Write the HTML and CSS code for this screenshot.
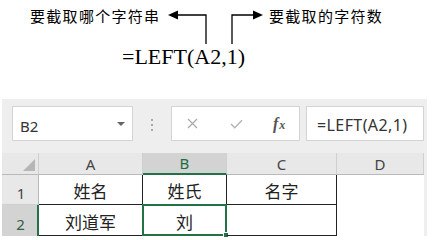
FILE: index.html
```html
<!DOCTYPE html>
<html lang="zh">
<head>
<meta charset="utf-8">
<title>LEFT</title>
<link rel="stylesheet" href="styles.css">
</head>
<body>
<div class="annot">
  <span class="lbl lbl-left">要截取哪个字符串</span>
  <svg class="arrows" width="100" height="45" viewBox="0 0 100 45">
    <polygon points="2,15 12,10.5 12,19.5" fill="#000"/>
    <polyline points="11,15 40,15 40,44" fill="none" stroke="#000" stroke-width="1.3"/>
    <polyline points="66,44 66,15 89,15" fill="none" stroke="#000" stroke-width="1.3"/>
    <polygon points="97,15 87,10.5 87,19.5" fill="#000"/>
  </svg>
  <span class="lbl lbl-right">要截取的字符数</span>
</div>
<div class="formula">=LEFT(A2,1)</div>

<div class="excel">
  <div class="fbar">
    <div class="namebox">
      <span class="nb-text">B2</span>
      <span class="caret"></span>
    </div>
    <div class="grip"><i></i><i></i><i></i></div>
    <div class="btns">
      <svg class="ico-x" width="11" height="11" viewBox="0 0 11 11">
        <path d="M1 1 L10 10 M10 1 L1 10" stroke="#a9a9a9" stroke-width="1.2" fill="none"/>
      </svg>
      <svg class="ico-ok" width="13" height="10" viewBox="0 0 13 10">
        <path d="M1 5 L4.8 8.8 L12 1.2" stroke="#b3b3b3" stroke-width="1.4" fill="none"/>
      </svg>
      <span class="fx"><span class="fx-f">f</span><span class="fx-x">x</span></span>
    </div>
    <div class="fbox">=LEFT(A2,1)</div>
  </div>

  <div class="grid">
    <div class="h corner"><span class="tri"></span></div>
    <div class="h col">A</div>
    <div class="h col col-sel">B</div>
    <div class="h col">C</div>
    <div class="h col">D</div>

    <div class="h row">1</div>
    <div class="c">姓名</div>
    <div class="c">姓氏</div>
    <div class="c">名字</div>
    <div class="c blank"></div>

    <div class="h row row-sel">2</div>
    <div class="c">刘道军</div>
    <div class="c sel">刘<span class="handle"></span></div>
    <div class="c"></div>
    <div class="c blank"></div>
  </div>
</div>
</body>
</html>
```

FILE: styles.css
```css
* { box-sizing: border-box; }
html, body { margin: 0; padding: 0; background: #fff; }
body { width: 436px; height: 239px; overflow: hidden; }

.annot {
  display: flex;
  align-items: flex-start;
  height: 45px;
}
.lbl {
  font-family: "Noto Sans CJK SC", sans-serif;
  font-size: 15px;
  line-height: 15px;
  letter-spacing: 1.3px;
  color: #000;
  padding-top: 8px;
  white-space: nowrap;
}
.lbl-left { margin-left: 30px; width: 136px; }
.arrows { display: block; flex: none; }
.lbl-right { margin-left: 3px; }

.formula {
  margin-left: 122px;
  font-family: "Liberation Serif", serif;
  font-size: 22px;
  line-height: 24px;
  height: 54px;
  color: #000;
}

.excel {
  margin-left: 2px;
  width: 425px;
  background: #eeeeee;
  padding-top: 7px;
}

.fbar {
  display: flex;
  height: 35px;
  padding-left: 10px;
}
.namebox {
  width: 121px;
  background: #fff;
  border: 1px solid #d4d4d4;
  display: flex;
  align-items: center;
  padding-left: 7px;
  padding-top: 4px;
}
.nb-text {
  font-family: "Noto Sans", sans-serif;
  font-size: 15px;
  color: #333;
  flex: 1;
}
.caret {
  width: 0; height: 0;
  border-left: 4px solid transparent;
  border-right: 4px solid transparent;
  border-top: 4px solid #666;
  margin-right: 7px;
  margin-top: -3px;
}
.grip {
  width: 38px;
  display: flex;
  flex-direction: column;
  align-items: center;
  justify-content: center;
  gap: 3px;
  padding-left: 0;
  padding-top: 2px;
}
.grip i {
  display: block;
  width: 2px; height: 2px;
  background: #a8a8a8;
}
.btns {
  width: 129px;
  background: #fff;
  border: 1px solid #d4d4d4;
  display: flex;
  align-items: center;
  padding-left: 15px;
}
.ico-x { display: block; }
.ico-ok { display: block; margin-left: 32px; margin-top: 1px; }
.fx {
  margin-left: 30px;
  font-family: "Liberation Serif", serif;
  font-style: italic;
  font-weight: bold;
  color: #555;
  display: flex;
  align-items: baseline;
}
.fx-f { font-size: 16px; }
.fx-x { font-size: 12px; margin-left: 1px; }
.fbox {
  width: 118px;
  margin-left: 6px;
  background: #fff;
  border: 1px solid #d4d4d4;
  display: flex;
  align-items: center;
  padding-left: 10px;
  padding-top: 3px;
  font-family: "Noto Sans", sans-serif;
  font-size: 16px;
  letter-spacing: 0.4px;
  color: #333;
  white-space: nowrap;
  overflow: hidden;
}

.grid {
  margin-top: 12px;
  display: grid;
  grid-template-columns: 37px 104px 84px 110px 87px;
  grid-template-rows: 22px 30px 31px;
  background: #fff;
  width: 422px;
}
.h {
  background: #e8e8e8;
  font-family: "Noto Sans", sans-serif;
  font-size: 15px;
  color: #444;
  display: flex;
  justify-content: center;
  align-items: flex-end;
  line-height: 18px;
}
.col {
  border-bottom: 1px solid #b9b9b9;
  border-right: 1px solid #cfcfcf;
  padding-bottom: 1px;
}
.col-sel {
  background: #d3d3d3;
  color: #1f6b3f;
  border-bottom: 2px solid #217346;
}
.corner {
  border-right: 1px solid #cfcfcf;
  border-bottom: 1px solid #b9b9b9;
  justify-content: flex-end;
  padding: 0 3px 3px 0;
}
.tri {
  width: 0; height: 0;
  border-left: 12px solid transparent;
  border-bottom: 12px solid #b6b6b6;
}
.row {
  border-right: 1px solid #b9b9b9;
  border-bottom: 1px solid #cfcfcf;
  padding-bottom: 2px;
  padding-left: 2px;
}
.row-sel {
  background: #d3d3d3;
  color: #2f5f44;
  border-right: 2px solid #217346;
  border-bottom: none;
  padding-bottom: 3px;
}
.c {
  position: relative;
  border-right: 1px solid #222;
  border-bottom: 1px solid #222;
  font-family: "Noto Sans CJK SC", sans-serif;
  font-size: 17px;
  color: #222;
  display: flex;
  justify-content: center;
  align-items: center;
  padding-top: 2px;
}
.c.blank { border: none; }
.sel {
  border: 2px solid #217346;
  margin-left: -1px;
  margin-top: -1px;
}
.handle {
  position: absolute;
  right: -4px;
  bottom: -4px;
  width: 6px; height: 6px;
  background: #217346;
  border: 1px solid #fff;
}
```
